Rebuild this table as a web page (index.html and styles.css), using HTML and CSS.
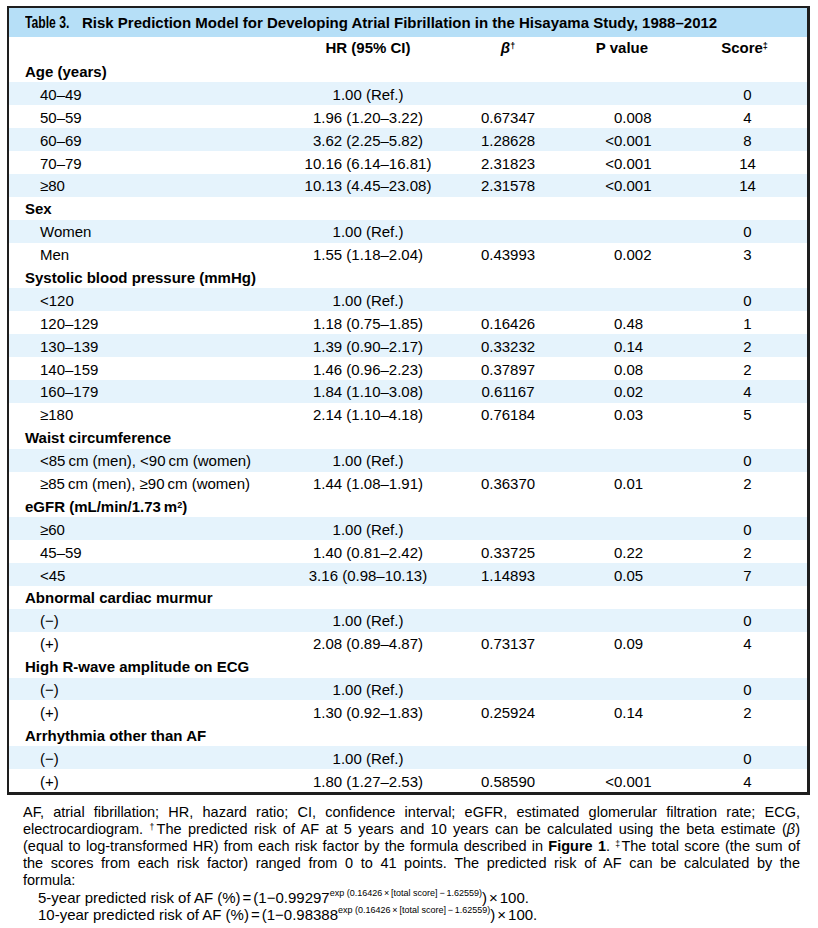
FILE: index.html
```html
<!DOCTYPE html>
<html lang="en">
<head>
<meta charset="utf-8">
<title>Table 3</title>
<link rel="stylesheet" href="styles.css">
</head>
<body>
<div class="page">
  <div class="table">
    <div class="caption"><span class="tno">Table 3.</span>Risk Prediction Model for Developing Atrial Fibrillation in the Hisayama Study, 1988–2012</div>
    <div class="row head">
      <div></div>
      <div class="c-hr">HR (95% CI)</div>
      <div class="c-b"><i>β</i><sup class="hs">†</sup></div>
      <div class="c-ph">P value</div>
      <div class="c-sh">Score<sup class="hs">‡</sup></div>
    </div>

    <div class="row grp"><div>Age (years)</div></div>
    <div class="row alt"><div class="lab">40–49</div><div class="c-hr">1.00 (Ref.)</div><div class="c-b"></div><div class="c-p"></div><div class="c-s">0</div></div>
    <div class="row"><div class="lab">50–59</div><div class="c-hr">1.96 (1.20–3.22)</div><div class="c-b">0.67347</div><div class="c-p">0.008</div><div class="c-s">4</div></div>
    <div class="row alt"><div class="lab">60–69</div><div class="c-hr">3.62 (2.25–5.82)</div><div class="c-b">1.28628</div><div class="c-p lt">&lt;0.001</div><div class="c-s">8</div></div>
    <div class="row"><div class="lab">70–79</div><div class="c-hr">10.16 (6.14–16.81)</div><div class="c-b">2.31823</div><div class="c-p lt">&lt;0.001</div><div class="c-s">14</div></div>
    <div class="row alt"><div class="lab">≥80</div><div class="c-hr">10.13 (4.45–23.08)</div><div class="c-b">2.31578</div><div class="c-p lt">&lt;0.001</div><div class="c-s">14</div></div>

    <div class="row grp"><div>Sex</div></div>
    <div class="row alt"><div class="lab">Women</div><div class="c-hr">1.00 (Ref.)</div><div class="c-b"></div><div class="c-p"></div><div class="c-s">0</div></div>
    <div class="row"><div class="lab">Men</div><div class="c-hr">1.55 (1.18–2.04)</div><div class="c-b">0.43993</div><div class="c-p">0.002</div><div class="c-s">3</div></div>

    <div class="row grp"><div>Systolic blood pressure (mmHg)</div></div>
    <div class="row alt"><div class="lab">&lt;120</div><div class="c-hr">1.00 (Ref.)</div><div class="c-b"></div><div class="c-p"></div><div class="c-s">0</div></div>
    <div class="row"><div class="lab">120–129</div><div class="c-hr">1.18 (0.75–1.85)</div><div class="c-b">0.16426</div><div class="c-p">0.48</div><div class="c-s">1</div></div>
    <div class="row alt"><div class="lab">130–139</div><div class="c-hr">1.39 (0.90–2.17)</div><div class="c-b">0.33232</div><div class="c-p">0.14</div><div class="c-s">2</div></div>
    <div class="row"><div class="lab">140–159</div><div class="c-hr">1.46 (0.96–2.23)</div><div class="c-b">0.37897</div><div class="c-p">0.08</div><div class="c-s">2</div></div>
    <div class="row alt"><div class="lab">160–179</div><div class="c-hr">1.84 (1.10–3.08)</div><div class="c-b">0.61167</div><div class="c-p">0.02</div><div class="c-s">4</div></div>
    <div class="row"><div class="lab">≥180</div><div class="c-hr">2.14 (1.10–4.18)</div><div class="c-b">0.76184</div><div class="c-p">0.03</div><div class="c-s">5</div></div>

    <div class="row grp"><div>Waist circumference</div></div>
    <div class="row alt"><div class="lab">&lt;85&thinsp;cm (men), &lt;90&thinsp;cm (women)</div><div class="c-hr">1.00 (Ref.)</div><div class="c-b"></div><div class="c-p"></div><div class="c-s">0</div></div>
    <div class="row"><div class="lab">≥85&thinsp;cm (men), ≥90&thinsp;cm (women)</div><div class="c-hr">1.44 (1.08–1.91)</div><div class="c-b">0.36370</div><div class="c-p">0.01</div><div class="c-s">2</div></div>

    <div class="row grp"><div>eGFR (mL/min/1.73&thinsp;m<sup class="hs">2</sup>)</div></div>
    <div class="row alt"><div class="lab">≥60</div><div class="c-hr">1.00 (Ref.)</div><div class="c-b"></div><div class="c-p"></div><div class="c-s">0</div></div>
    <div class="row"><div class="lab">45–59</div><div class="c-hr">1.40 (0.81–2.42)</div><div class="c-b">0.33725</div><div class="c-p">0.22</div><div class="c-s">2</div></div>
    <div class="row alt"><div class="lab">&lt;45</div><div class="c-hr">3.16 (0.98–10.13)</div><div class="c-b">1.14893</div><div class="c-p">0.05</div><div class="c-s">7</div></div>

    <div class="row grp"><div>Abnormal cardiac murmur</div></div>
    <div class="row alt"><div class="lab">(−)</div><div class="c-hr">1.00 (Ref.)</div><div class="c-b"></div><div class="c-p"></div><div class="c-s">0</div></div>
    <div class="row"><div class="lab">(+)</div><div class="c-hr">2.08 (0.89–4.87)</div><div class="c-b">0.73137</div><div class="c-p">0.09</div><div class="c-s">4</div></div>

    <div class="row grp"><div>High R-wave amplitude on ECG</div></div>
    <div class="row alt"><div class="lab">(−)</div><div class="c-hr">1.00 (Ref.)</div><div class="c-b"></div><div class="c-p"></div><div class="c-s">0</div></div>
    <div class="row"><div class="lab">(+)</div><div class="c-hr">1.30 (0.92–1.83)</div><div class="c-b">0.25924</div><div class="c-p">0.14</div><div class="c-s">2</div></div>

    <div class="row grp"><div>Arrhythmia other than AF</div></div>
    <div class="row alt"><div class="lab">(−)</div><div class="c-hr">1.00 (Ref.)</div><div class="c-b"></div><div class="c-p"></div><div class="c-s">0</div></div>
    <div class="row"><div class="lab">(+)</div><div class="c-hr">1.80 (1.27–2.53)</div><div class="c-b">0.58590</div><div class="c-p lt">&lt;0.001</div><div class="c-s">4</div></div>
  </div>

  <div class="notes">
    <div class="jl">AF, atrial fibrillation; HR, hazard ratio; CI, confidence interval; eGFR, estimated glomerular filtration rate; ECG,</div>
    <div class="jl">electrocardiogram. <sup>†</sup>The predicted risk of AF at 5 years and 10 years can be calculated using the beta estimate (<i>β</i>)</div>
    <div class="jl">(equal to log-transformed HR) from each risk factor by the formula described in <b>Figure 1</b>. <sup>‡</sup>The total score (the sum of</div>
    <div class="jl">the scores from each risk factor) ranged from 0 to 41 points. The predicted risk of AF can be calculated by the</div>
    <div>formula:</div>
    <div class="formula">5-year predicted risk of AF (%)<span class="eq">=</span>(1−0.99297<sup class="ex">exp (0.16426&thinsp;×&thinsp;[total score]&thinsp;−&thinsp;1.62559)</sup>)<span class="eq">×</span>100.</div>
    <div class="formula">10-year predicted risk of AF (%)<span class="eq">=</span>(1−0.98388<sup class="ex">exp (0.16426&thinsp;×&thinsp;[total score]&thinsp;−&thinsp;1.62559)</sup>)<span class="eq">×</span>100.</div>
  </div>
</div>
</body>
</html>
```

FILE: styles.css
```css
html, body {
  margin: 0;
  padding: 0;
  background: #ffffff;
  color: #000000;
  font-family: "Liberation Sans", Arial, Helvetica, sans-serif;
}

.page {
  padding: 6px 0 0 7px;
  width: 803px;
}

.table {
  width: 803px;
  box-sizing: border-box;
  border-style: solid;
  border-color: #1e1e1e;
  border-width: 2px 3px 3px 2px;
}

.caption {
  height: 29px;
  line-height: 29px;
  background: #b6dff7;
  font-weight: bold;
  font-size: 15px;
  padding-left: 16px;
  white-space: nowrap;
}

.tno {
  display: inline-block;
  font-size: 16px;
  transform: scaleX(0.76);
  transform-origin: left center;
  margin-right: 1px;
  width: 56px;
}

.row {
  display: grid;
  grid-template-columns: 279px 160px 120px 120px 1fr;
  box-sizing: border-box;
  height: 22.9px;
  padding-top: 2.5px;
  line-height: 20.4px;
  font-size: 15px;
  white-space: nowrap;
}

.row.alt {
  background: #e5f3fc;
}

.row.head {
  height: 22.5px;
  padding-top: 0;
  line-height: 22.5px;
  font-weight: bold;
}

.row.grp {
  font-weight: bold;
  padding-left: 16px;
}

.lab {
  padding-left: 31px;
}

.c-hr,
.c-b,
.c-s {
  text-align: center;
}

.c-ph {
  text-align: center;
  padding-right: 12px;
}

.c-sh {
  text-align: center;
  padding-right: 6px;
}

.c-p {
  text-align: left;
  padding-left: 46px;
}

.c-p.lt {
  text-indent: -8.8px;
}

sup {
  font-size: 0.6em;
  line-height: 0;
  vertical-align: 0.5em;
}

sup.hs {
  font-size: 0.6em;
  vertical-align: 0.4em;
}

.notes {
  margin-top: 9px;
  margin-left: 16px;
  width: 777px;
  font-size: 14.5px;
  line-height: 17px;
}

.jl {
  text-align: justify;
  text-align-last: justify;
}

.formula {
  padding-left: 15px;
  font-size: 15px;
  line-height: 17px;
  white-space: nowrap;
}

.formula .ex {
  font-size: 9px;
  vertical-align: 0.75em;
}

.eq {
  margin: 0 2px;
}
```
